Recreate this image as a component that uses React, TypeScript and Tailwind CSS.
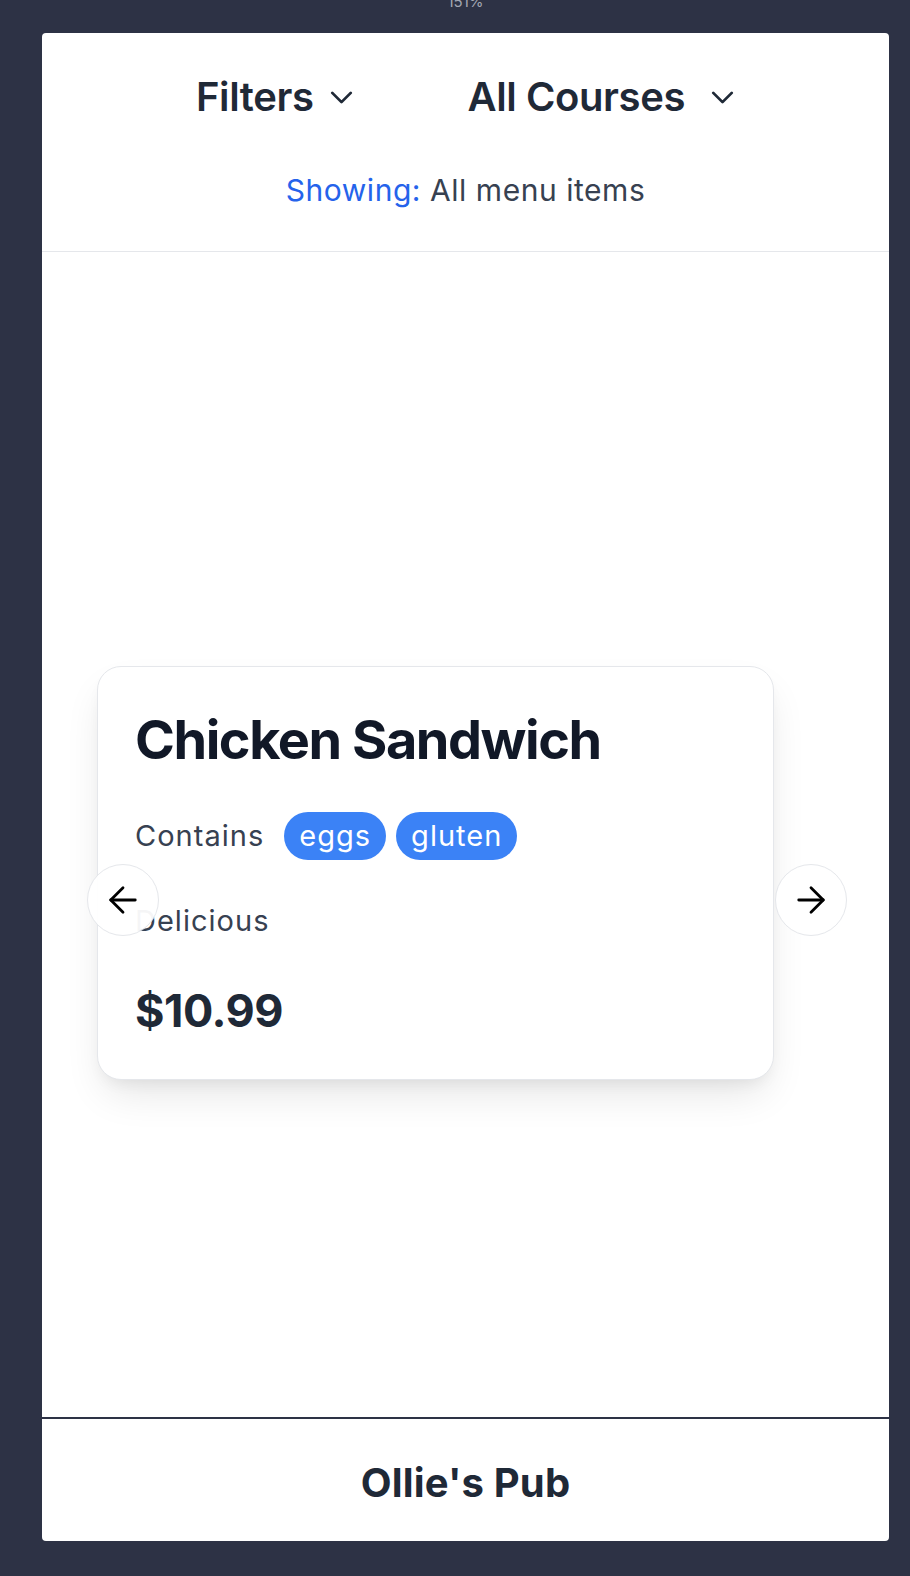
import { ArrowLeft, ArrowRight, ChevronDown } from "lucide-react";

const allergens = ["eggs", "gluten"];

export default function App() {
  return (
    <div className="min-h-[1576px] bg-[#2d3245] font-['Inter',sans-serif]">
      <div className="ml-[42px] w-[847px]">
        <div className="h-[33px] overflow-hidden text-center">
          <span className="-mt-[7px] block text-[15px] leading-[18px] text-[#a3a7b3]">
            151%
          </span>
        </div>

        <div className="flex flex-col rounded-[4px] bg-white">
          {/* header */}
          <div className="flex flex-col items-center border-b border-[#e5e7eb] pt-[40px] pb-[41px]">
            <div className="flex items-center gap-[107px] pl-[6px]">
              <button className="flex items-center gap-[10px] text-[40px] leading-[48px] font-semibold tracking-[-0.01em] text-[#1f2937]">
                Filters
                <ChevronDown size={37} strokeWidth={1.8} />
              </button>
              <button className="flex items-center gap-[19px] text-[40px] leading-[48px] font-semibold tracking-[-0.01em] text-[#1f2937]">
                All Courses
                <ChevronDown size={37} strokeWidth={1.8} />
              </button>
            </div>
            <p className="mt-[49px] text-[30px] leading-[40px] tracking-[0.018em] text-[#374151]">
              <span className="text-[#2563eb]">Showing:</span> All menu items
            </p>
          </div>

          {/* carousel */}
          <div className="flex h-[1165px] items-center pt-[77px]">
            <div className="relative ml-[55px]">
              <div className="flex w-[677px] flex-col rounded-[24px] border border-[#e5e7eb] bg-white px-[37px] pt-[43px] pb-[43px] shadow-[0_20px_40px_-8px_rgba(0,0,0,0.11),0_8px_16px_-6px_rgba(0,0,0,0.07)]">
                <h2 className="text-[54px] leading-[60px] font-bold tracking-[-0.027em] text-[#111827]">
                  Chicken Sandwich
                </h2>
                <div className="mt-[42px] flex h-[48px] items-center text-[29px] tracking-[0.035em]">
                  <span className="mr-[20px] text-[#374151]">Contains</span>
                  <div className="flex gap-[10px]">
                    {allergens.map((a) => (
                      <span
                        key={a}
                        className="flex h-[48px] items-center rounded-full bg-[#3b82f6] px-[15px] text-white"
                      >
                        {a}
                      </span>
                    ))}
                  </div>
                </div>
                <p className="mt-[41px] text-[29px] leading-[40px] tracking-[0.035em] text-[#374151]">
                  Delicious
                </p>
                <p className="mt-[45px] text-[45px] leading-[50px] font-bold tracking-[-0.01em] text-[#1f2937]">
                  $10.99
                </p>
              </div>

              <button className="absolute top-[198px] left-[-10px] flex h-[72px] w-[72px] items-center justify-center rounded-full border border-[#e5e7eb] bg-white/95 text-black">
                <ArrowLeft size={42} strokeWidth={1.6} />
              </button>
              <button className="absolute top-[198px] right-[-73px] flex h-[72px] w-[72px] items-center justify-center rounded-full border border-[#e5e7eb] bg-white/95 text-black">
                <ArrowRight size={42} strokeWidth={1.6} />
              </button>
            </div>
          </div>

          {/* footer */}
          <div className="border-t-2 border-[#2d3245] pt-[41px] pb-[35px] text-center">
            <h1 className="text-[40px] leading-[46px] font-bold tracking-[0.005em] text-[#1f2937]">
              Ollie's Pub
            </h1>
          </div>
        </div>
      </div>
    </div>
  );
}
